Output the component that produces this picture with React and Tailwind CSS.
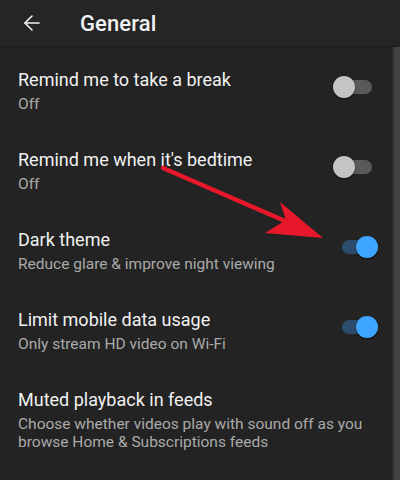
import { ArrowLeft } from 'lucide-react'

const settings = [
  { title: 'Remind me to take a break', sub: ['Off'], toggle: 'off' },
  { title: "Remind me when it's bedtime", sub: ['Off'], toggle: 'off' },
  { title: 'Dark theme', sub: ['Reduce glare & improve night viewing'], toggle: 'on' },
  { title: 'Limit mobile data usage', sub: ['Only stream HD video on Wi-Fi'], toggle: 'on' },
  {
    title: 'Muted playback in feeds',
    sub: ['Choose whether videos play with sound off as you', 'browse Home & Subscriptions feeds'],
  },
]

function Toggle({ on }) {
  return (
    <div className="relative mt-[8px] h-[22px] w-[45px] shrink-0">
      <div
        className={
          on
            ? 'absolute left-[9px] top-[4px] h-[14px] w-[30px] rounded-full bg-[#2c4d6b]'
            : 'absolute left-[9px] top-[4px] h-[14px] w-[30px] rounded-full bg-[#595959]'
        }
      />
      <div
        className={
          on
            ? 'absolute right-0 top-0 h-[22px] w-[22px] rounded-full bg-[#3ea6ff] shadow-[0_1px_2px_rgba(0,0,0,0.6)]'
            : 'absolute left-0 top-0 h-[22px] w-[22px] rounded-full bg-[#c4c4c4] shadow-[0_1px_2px_rgba(0,0,0,0.6)]'
        }
      />
    </div>
  )
}

export default function App() {
  return (
    <div
      className="relative h-[480px] w-[400px] overflow-hidden bg-[#232323] text-[#f1f1f1]"
      style={{ fontFamily: 'Roboto, "Noto Sans", sans-serif' }}
    >
      <header className="flex h-[47px] items-center border-b border-[#1b1b1b] bg-[#252525]">
        <ArrowLeft className="ml-[20px] h-[24px] w-[24px] text-[#f1f1f1]" strokeWidth={1.6} />
        <h1 className="ml-[36px] text-[22px] font-medium tracking-[0.1px]">General</h1>
      </header>
      <div className="flex">
        <main className="flex-1">
          {settings.map((s) => (
            <div key={s.title} className="flex h-[80px] items-start pl-[18px] pr-[14px] pt-[21px]">
              <div className="flex-1">
                <div className="text-[18px] leading-[24px]">{s.title}</div>
                <div className="mt-[3px]">
                  {s.sub.map((line) => (
                    <div key={line} className="text-[15.5px] leading-[18px] text-[#aaaaaa]">
                      {line}
                    </div>
                  ))}
                </div>
              </div>
              {s.toggle && <Toggle on={s.toggle === 'on'} />}
            </div>
          ))}
        </main>
        <div className="h-[433px] w-[8px] border-l-2 border-[#2e2e2e] bg-[#444444]" />
      </div>
      <svg className="absolute left-0 top-0" width="400" height="480" viewBox="0 0 400 480">
        <line x1="163" y1="168" x2="292" y2="224" stroke="#e8182b" strokeWidth="4.5" strokeLinecap="round" />
        <polygon points="323,238 280,202 286,220 265,233" fill="#e8182b" />
      </svg>
    </div>
  )
}
